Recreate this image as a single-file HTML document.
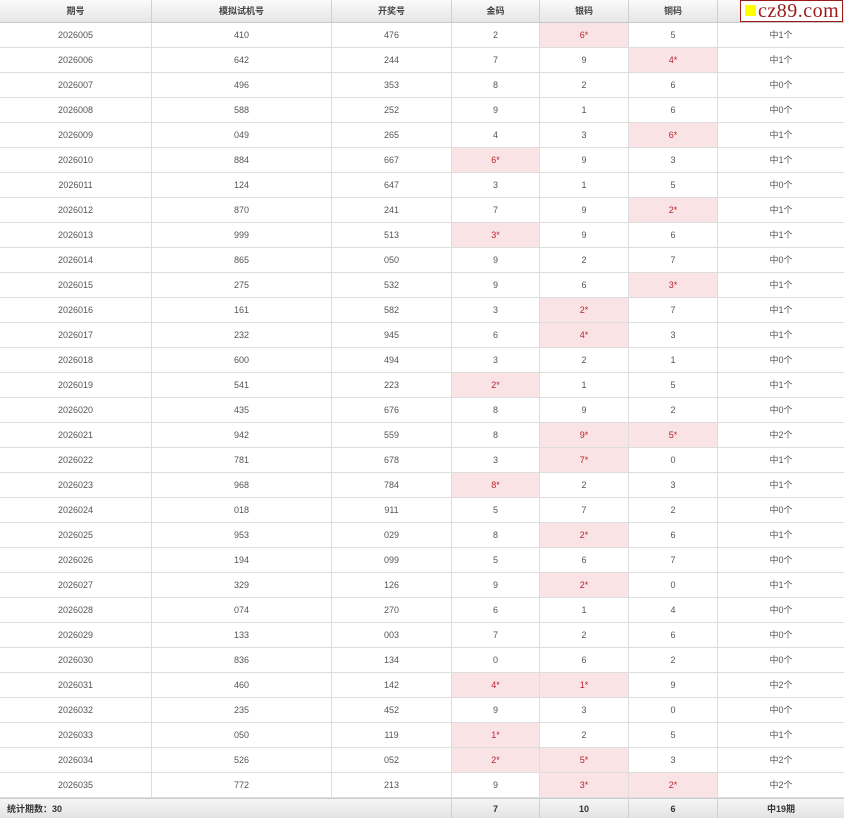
<!DOCTYPE html>
<html><head><meta charset="utf-8"><style>
html,body{margin:0;padding:0;background:#fff;width:844px;height:818px;overflow:hidden}
table{border-collapse:separate;border-spacing:0;table-layout:fixed;width:844px;font-family:"Liberation Sans","Noto Sans CJK SC",sans-serif;font-size:9px;color:#555}
td,th{padding:0;text-align:center;vertical-align:middle;line-height:11px;border-right:1px solid #ddd;border-bottom:1px solid #ddd;overflow:hidden;white-space:nowrap}
td:last-child,th:last-child{border-right:none}
th{height:22px;background:linear-gradient(#fafafa,#e6e6e6);font-weight:bold;color:#444;border-right:1px solid #d0d0d0;border-bottom:1px solid #c8c8c8}
tbody td{height:24px}
td.h{background:#f9e3e4;color:#b8252b}
tfoot td{height:20px;background:linear-gradient(#f6f6f6,#e2e2e2);font-weight:bold;color:#333;border-bottom:none;border-top:1px solid #ccc;border-right:1px solid #d0d0d0}
.logo{position:absolute;left:740px;top:0;width:101px;height:20px;border:1px solid #9b1b1b;background:#fff;font-family:"Liberation Serif",serif;font-size:20px;line-height:20px;color:#9b1b1b;letter-spacing:0.5px}
.logo span{display:inline-block;width:11px;height:11px;background:#ffff00;margin:0 2px 0 4px;vertical-align:1px}
</style></head><body>
<table>
<colgroup><col style="width:152px"><col style="width:180px"><col style="width:120px"><col style="width:88px"><col style="width:89px"><col style="width:89px"><col style="width:126px"></colgroup>
<thead><tr><th>期号</th><th>模拟试机号</th><th>开奖号</th><th>金码</th><th>银码</th><th>铜码</th><th></th></tr></thead>
<tbody>
<tr><td>2026005</td><td>410</td><td>476</td><td>2</td><td class="h">6*</td><td>5</td><td>中1个</td></tr>
<tr><td>2026006</td><td>642</td><td>244</td><td>7</td><td>9</td><td class="h">4*</td><td>中1个</td></tr>
<tr><td>2026007</td><td>496</td><td>353</td><td>8</td><td>2</td><td>6</td><td>中0个</td></tr>
<tr><td>2026008</td><td>588</td><td>252</td><td>9</td><td>1</td><td>6</td><td>中0个</td></tr>
<tr><td>2026009</td><td>049</td><td>265</td><td>4</td><td>3</td><td class="h">6*</td><td>中1个</td></tr>
<tr><td>2026010</td><td>884</td><td>667</td><td class="h">6*</td><td>9</td><td>3</td><td>中1个</td></tr>
<tr><td>2026011</td><td>124</td><td>647</td><td>3</td><td>1</td><td>5</td><td>中0个</td></tr>
<tr><td>2026012</td><td>870</td><td>241</td><td>7</td><td>9</td><td class="h">2*</td><td>中1个</td></tr>
<tr><td>2026013</td><td>999</td><td>513</td><td class="h">3*</td><td>9</td><td>6</td><td>中1个</td></tr>
<tr><td>2026014</td><td>865</td><td>050</td><td>9</td><td>2</td><td>7</td><td>中0个</td></tr>
<tr><td>2026015</td><td>275</td><td>532</td><td>9</td><td>6</td><td class="h">3*</td><td>中1个</td></tr>
<tr><td>2026016</td><td>161</td><td>582</td><td>3</td><td class="h">2*</td><td>7</td><td>中1个</td></tr>
<tr><td>2026017</td><td>232</td><td>945</td><td>6</td><td class="h">4*</td><td>3</td><td>中1个</td></tr>
<tr><td>2026018</td><td>600</td><td>494</td><td>3</td><td>2</td><td>1</td><td>中0个</td></tr>
<tr><td>2026019</td><td>541</td><td>223</td><td class="h">2*</td><td>1</td><td>5</td><td>中1个</td></tr>
<tr><td>2026020</td><td>435</td><td>676</td><td>8</td><td>9</td><td>2</td><td>中0个</td></tr>
<tr><td>2026021</td><td>942</td><td>559</td><td>8</td><td class="h">9*</td><td class="h">5*</td><td>中2个</td></tr>
<tr><td>2026022</td><td>781</td><td>678</td><td>3</td><td class="h">7*</td><td>0</td><td>中1个</td></tr>
<tr><td>2026023</td><td>968</td><td>784</td><td class="h">8*</td><td>2</td><td>3</td><td>中1个</td></tr>
<tr><td>2026024</td><td>018</td><td>911</td><td>5</td><td>7</td><td>2</td><td>中0个</td></tr>
<tr><td>2026025</td><td>953</td><td>029</td><td>8</td><td class="h">2*</td><td>6</td><td>中1个</td></tr>
<tr><td>2026026</td><td>194</td><td>099</td><td>5</td><td>6</td><td>7</td><td>中0个</td></tr>
<tr><td>2026027</td><td>329</td><td>126</td><td>9</td><td class="h">2*</td><td>0</td><td>中1个</td></tr>
<tr><td>2026028</td><td>074</td><td>270</td><td>6</td><td>1</td><td>4</td><td>中0个</td></tr>
<tr><td>2026029</td><td>133</td><td>003</td><td>7</td><td>2</td><td>6</td><td>中0个</td></tr>
<tr><td>2026030</td><td>836</td><td>134</td><td>0</td><td>6</td><td>2</td><td>中0个</td></tr>
<tr><td>2026031</td><td>460</td><td>142</td><td class="h">4*</td><td class="h">1*</td><td>9</td><td>中2个</td></tr>
<tr><td>2026032</td><td>235</td><td>452</td><td>9</td><td>3</td><td>0</td><td>中0个</td></tr>
<tr><td>2026033</td><td>050</td><td>119</td><td class="h">1*</td><td>2</td><td>5</td><td>中1个</td></tr>
<tr><td>2026034</td><td>526</td><td>052</td><td class="h">2*</td><td class="h">5*</td><td>3</td><td>中2个</td></tr>
<tr><td>2026035</td><td>772</td><td>213</td><td>9</td><td class="h">3*</td><td class="h">2*</td><td>中2个</td></tr>
</tbody>
<tfoot><tr><td colspan="3" style="text-align:left;padding-left:7px">统计期数：30</td><td>7</td><td>10</td><td>6</td><td>中19期</td></tr></tfoot>
</table>
<div class="logo"><span></span>cz89.com</div>
</body></html>
